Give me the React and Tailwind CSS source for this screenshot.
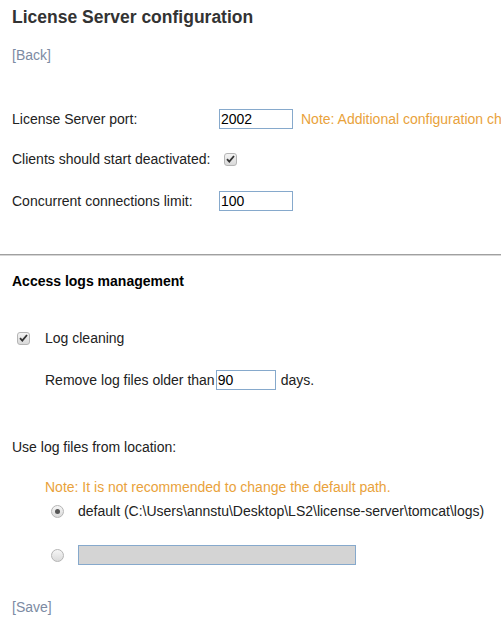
import { useState } from "react";

function Check({ checked = true }) {
  return (
    <span className="inline-flex items-center justify-center w-[13px] h-[13px] rounded-[3px] border border-[#b5b5b5] bg-gradient-to-b from-[#f4f4f4] to-[#d9d9d9] shrink-0">
      {checked && (
        <svg width="9" height="8" viewBox="0 0 9 8">
          <path d="M1 4.2 L3.3 6.6 L8 1" fill="none" stroke="#333" strokeWidth="1.8" />
        </svg>
      )}
    </span>
  );
}

function Radio({ checked }) {
  return (
    <span className="inline-flex items-center justify-center w-[13px] h-[13px] rounded-full border border-[#b5b5b5] bg-gradient-to-b from-[#f6f6f6] to-[#dadada] shrink-0">
      {checked && <span className="w-[5px] h-[5px] rounded-full bg-[#555]" />}
    </span>
  );
}

function TextBox({ value, className = "" }) {
  return (
    <input
      defaultValue={value}
      className={`h-[20px] shrink-0 border border-[#86a9cc] px-[1px] text-[14px] text-black outline-none ${className}`}
    />
  );
}

export default function App() {
  const [useDefault] = useState(true);

  return (
    <div className="w-[501px] h-[634px] overflow-hidden bg-white text-[14px] text-[#222] font-['Liberation_Sans',Arial,sans-serif]">
      <div className="pl-3 pt-[6px]">
        <h1 className="text-[17.5px] font-bold text-[#333] leading-[22px]">License Server configuration</h1>
        <div className="mt-[19px] text-[#7d8ba3] leading-[16px]">[Back]</div>

        {/* the note runs past the window edge, as in the original */}
        <div className="mt-[46px] flex items-center h-[20px] whitespace-nowrap">
          <span className="w-[207px] shrink-0">License Server port:</span>
          <TextBox value="2002" className="w-[74px]" />
          <span className="ml-[8px] shrink-0 text-[#e9a23b]">Note: Additional configuration changes are required</span>
        </div>
        <div className="mt-[21px] flex items-center h-[18px]">
          <span className="w-[212px] shrink-0">Clients should start deactivated:</span>
          <Check />
        </div>
        <div className="mt-[23px] flex items-center h-[20px]">
          <span className="w-[207px] shrink-0">Concurrent connections limit:</span>
          <TextBox value="100" className="w-[74px]" />
        </div>
      </div>

      <div className="mt-[43px] h-[2px] border-t border-[#a0a0a0] bg-[#d6d6d6]" />

      <div className="px-3">
        <h2 className="mt-[17px] font-bold text-black leading-[16px]">Access logs management</h2>

        <div className="mt-[40px] ml-[5px] flex items-center h-[18px] gap-[15px]">
          <Check />
          <span>Log cleaning</span>
        </div>
        <div className="mt-[23px] ml-[33px] flex items-center h-[20px] gap-[1px] whitespace-nowrap">
          <span>Remove log files older than</span>
          <TextBox value="90" className="w-[60px]" />
          <span className="ml-[4px]">days.</span>
        </div>

        <div className="mt-[49px] leading-[16px]">Use log files from location:</div>

        <div className="mt-[24px] ml-[33px] text-[#e9a23b] leading-[16px]">Note: It is not recommended to change the default path.</div>
        <div className="mt-[7px] ml-[39px] flex items-center h-[18px] gap-[14px] whitespace-nowrap">
          <Radio checked={useDefault} />
          <span>default (C:\Users\annstu\Desktop\LS2\license-server\tomcat\logs)</span>
        </div>
        <div className="mt-[25px] ml-[39px] flex items-center h-[20px] gap-[14px]">
          <Radio checked={!useDefault} />
          <input disabled className="w-[278px] h-[20px] border border-[#86a9cc] bg-[#d4d4d4]" />
        </div>

        <div className="mt-[34px] text-[#7d8ba3] leading-[16px]">[Save]</div>
      </div>
    </div>
  );
}
